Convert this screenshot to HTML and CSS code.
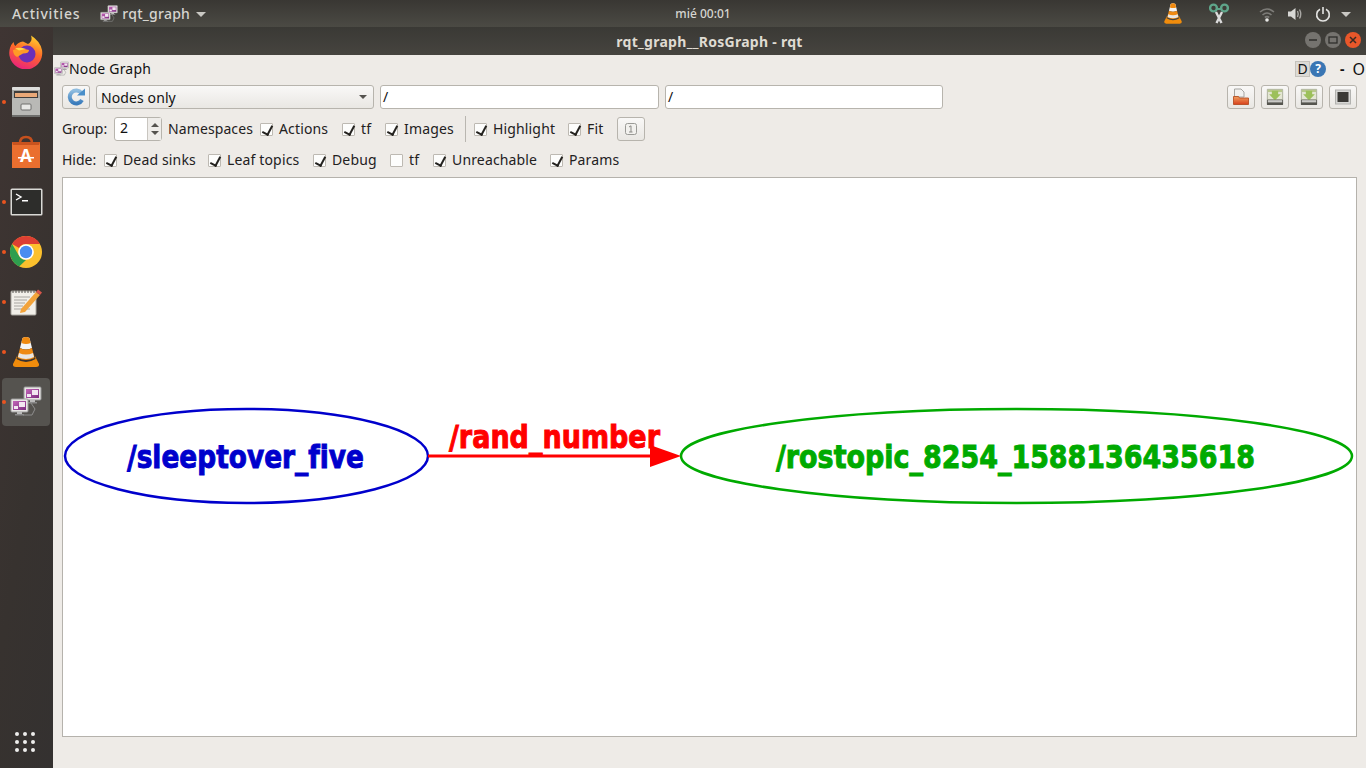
FILE: index.html
```html
<!DOCTYPE html>
<html lang="es">
<head>
<meta charset="utf-8">
<title>rqt_graph__RosGraph - rqt</title>
<link rel="stylesheet" href="styles.css">
</head>
<body>
<svg class="defs" width="0" height="0" aria-hidden="true">
  <defs>
    <linearGradient id="screen" x1="0" y1="0" x2="1" y2="1"><stop offset="0" stop-color="#c266b8"/><stop offset="1" stop-color="#7d2d80"/></linearGradient>
    <linearGradient id="folder" x1="0" y1="0" x2="0" y2="1"><stop offset="0" stop-color="#f0a060"/><stop offset="1" stop-color="#d8401c"/></linearGradient>
    <linearGradient id="blue" x1="0" y1="0" x2="0" y2="1"><stop offset="0" stop-color="#8fbde0"/><stop offset="1" stop-color="#3a7cbc"/></linearGradient>
    <symbol id="rqt" viewBox="0 0 32 32">
      <path d="M13 29 L22 29 L25 23 L21 17" fill="none" stroke="#8d8d8d" stroke-width="1"/>
      <rect x="14" y="1" width="17" height="13" rx="1" fill="#e8e6e4" stroke="#9a9a9a"/>
      <rect x="16" y="3" width="13" height="9" fill="url(#screen)"/>
      <rect x="17" y="8" width="4" height="3" fill="#f2e6f1"/><rect x="22" y="4" width="6" height="5" fill="#f2e6f1"/>
      <rect x="20" y="14" width="5" height="2" fill="#bbb"/><rect x="18" y="16" width="9" height="1.500" fill="#8a8a8a"/>
      <rect x="1" y="13" width="17" height="13" rx="1" fill="#e8e6e4" stroke="#9a9a9a"/>
      <rect x="3" y="15" width="13" height="9" fill="url(#screen)"/>
      <rect x="4" y="20" width="4" height="3" fill="#f2e6f1"/><rect x="9" y="16" width="6" height="5" fill="#f2e6f1"/>
      <rect x="7" y="26" width="5" height="2" fill="#bbb"/><rect x="5" y="28" width="9" height="1.500" fill="#8a8a8a"/>
    </symbol>
    <symbol id="vlc" viewBox="0 0 32 34">
      <path d="M12.500 3 Q16 1 19.500 3 L22 13 Q16 16 10 13 Z" fill="#f5f5f5"/>
      <path d="M12.500 3 Q16 1 19.500 3 L20.600 8 Q16 10 11.400 8 Z" fill="#f08a10"/>
      <path d="M10 13 Q16 16 22 13 L24.500 23 Q16 27 7.500 23 Z" fill="#ef8a12"/>
      <path d="M9 18 Q16 21 23 18 L24 22 Q16 26 8 22 Z" fill="#e9e6e2"/>
      <path d="M7.500 20 L3 29 Q2.500 32 6 32 L26 32 Q29.500 32 29 29 L24.500 20 L25.500 24 Q16 30 6.500 24 Z" fill="#f08c0c"/>
    </symbol>
    <symbol id="drive" viewBox="0 0 20 20">
      <path d="M1.500 1.500 H18.500 V13 H1.500 Z" fill="#e4e6d4" stroke="#a8ac96"/>
      <path d="M2 2 H18 V4.500 H2 Z" fill="#b8c88c"/>
      <path d="M6.500 3 H13.500 V7 H16.500 L10 13.500 L3.500 7 H6.500 Z" fill="#9cc05a"/>
      <path d="M1 13 H19 L19 18 Q19 19 18 19 H2 Q1 19 1 18 Z" fill="#55554f"/>
      <rect x="2" y="13.500" width="16" height="2.500" fill="#c9c9c6"/>
    </symbol>
  </defs>
</svg>

<header class="topbar">
  <div class="top-left">
    <span class="activities">Activities</span>
    <span class="appmenu">
      <svg class="app-icon" width="18" height="18"><use href="#rqt"/></svg>
      <span class="appname">rqt_graph</span>
      <span class="caret"></span>
    </span>
  </div>
  <div class="clock">mié 00:01</div>
  <div class="tray">
    <svg class="tray-vlc" width="22" height="23"><use href="#vlc"/></svg>
    <svg class="tray-scissors" width="20" height="22" viewBox="0 0 20 22">
      <circle cx="4.500" cy="5" r="3.400" fill="none" stroke="#5fa58a" stroke-width="2.400"/>
      <circle cx="15.500" cy="5" r="3.400" fill="none" stroke="#5fa58a" stroke-width="2.400"/>
      <path d="M8 6 H12" stroke="#5fa58a" stroke-width="2"/>
      <path d="M7 9 L12.500 20 M13 9 L7.500 20" stroke="#dcdcdc" stroke-width="2.400" fill="none"/>
    </svg>
    <svg class="tray-wifi" width="16" height="16" viewBox="0 0 16 16">
      <path d="M1 6 Q8 0 15 6 M3.500 9 Q8 5 12.500 9 M5.800 11.500 Q8 9.800 10.200 11.500" fill="none" stroke="#7d7c78" stroke-width="1.600"/>
      <circle cx="8" cy="14" r="1.800" fill="#e8e8e6"/>
    </svg>
    <svg class="tray-vol" width="16" height="16" viewBox="0 0 16 16">
      <path d="M1 5.500 H4 L8.500 2 V14 L4 10.500 H1 Z" fill="#d8d8d5"/>
      <path d="M10.500 5 Q12 8 10.500 11 M12.500 3.500 Q15 8 12.500 12.500" fill="none" stroke="#a9a8a4" stroke-width="1.400"/>
    </svg>
    <svg class="tray-power" width="16" height="16" viewBox="0 0 16 16">
      <path d="M5 3.200 A6.300 6.300 0 1 0 11 3.200" fill="none" stroke="#e4e4e2" stroke-width="1.600"/>
      <path d="M8 1 V8" stroke="#e4e4e2" stroke-width="1.600"/>
    </svg>
    <span class="caret tray-caret"></span>
  </div>
</header>

<div class="desktop">
  <nav class="dock">
    <div class="dock-item">
      <svg width="34" height="34" viewBox="0 0 34 34">
        <defs>
          <linearGradient id="ffa" x1="0.700" y1="0" x2="0.300" y2="1"><stop offset="0" stop-color="#ffd02e"/><stop offset="0.450" stop-color="#ff6a28"/><stop offset="1" stop-color="#e81f80"/></linearGradient>
        </defs>
        <path d="M22 0.500 Q31 6 33 15 A16.500 16.500 0 1 1 1 13 Q2 9.500 4.500 7 Q5 10 6.500 11 Q9 7 14 6.500 L19 9 Q24 6 22 0.500 Z" fill="url(#ffa)"/>
        <circle cx="18" cy="19" r="8.500" fill="#6b2fb8"/>
        <path d="M4 15 Q11 12 20 15 Q20 18.500 14 18.500 L8 22 Q4 20 4 15 Z" fill="#ff9a26"/>
        <path d="M6 13 Q12 12 17 14 L10 15.500 Z" fill="#ffd84a"/>
      </svg>
    </div>
    <div class="dock-item running">
      <svg width="32" height="32" viewBox="0 0 32 32">
        <rect x="2" y="1" width="28" height="30" rx="2" fill="#a6a6a3"/>
        <rect x="2" y="1" width="28" height="3" rx="1" fill="#dededc"/>
        <rect x="4" y="5" width="24" height="9" fill="#3f3d3b"/>
        <rect x="5" y="7" width="22" height="4" fill="#e9a877"/>
        <rect x="2" y="12" width="28" height="19" rx="1" fill="#b9b9b6"/>
        <rect x="2" y="29" width="28" height="2" fill="#6e6e6c"/>
        <rect x="11" y="18" width="10" height="6" rx="1" fill="#e8e8e6" stroke="#6f6f6d"/>
      </svg>
    </div>
    <div class="dock-item">
      <svg width="32" height="34" viewBox="0 0 32 34">
        <path d="M10 8 Q10 2 16 2 Q22 2 22 8" fill="none" stroke="#c6501d" stroke-width="2.500"/>
        <path d="M2 7 H30 V33 H2 Z" fill="#ea6f2f"/>
        <path d="M2 7 H30 L29 10 H3 Z" fill="#c9531e"/>
        <text class="bag-letter" x="16" y="27" text-anchor="middle">A</text>
        <rect x="8" y="22" width="16" height="1.500" fill="#fff"/>
      </svg>
    </div>
    <div class="dock-item running">
      <svg width="33" height="28" viewBox="0 0 33 28">
        <rect x="0.500" y="0.500" width="32" height="27" rx="1.500" fill="#d9d9d6"/>
        <rect x="2" y="2" width="29" height="24" fill="#2d2d2b"/>
        <path d="M6 6 L11 9 L6 12" fill="none" stroke="#fff" stroke-width="1.400"/>
        <rect x="12" y="12" width="6" height="1.500" fill="#fff"/>
      </svg>
    </div>
    <div class="dock-item running">
      <svg width="32" height="32" viewBox="0 0 32 32">
        <circle cx="16" cy="16" r="16" fill="#fbc02d"/>
        <path d="M16 0 A16 16 0 0 1 29.900 8 L16 8 A8 8 0 0 0 9 12 L2.100 8 A16 16 0 0 1 16 0 Z" fill="#dd3f33"/>
        <path d="M2.100 8 L9.100 20 A8 8 0 0 0 16 24 L9.200 30.500 A16 16 0 0 1 2.100 8 Z" fill="#2e9e4f"/>
        <circle cx="16" cy="16" r="7.800" fill="#fff"/>
        <circle cx="16" cy="16" r="6.200" fill="#4a8df0"/>
      </svg>
    </div>
    <div class="dock-item running">
      <svg width="32" height="28" viewBox="0 0 32 28">
        <rect x="1" y="3" width="25" height="24" rx="1" fill="#f1efe9" stroke="#a8a69f"/>
        <path d="M3 2 V5 M6 2 V5 M9 2 V5 M12 2 V5 M15 2 V5 M18 2 V5 M21 2 V5 M24 2 V5" stroke="#55534f" stroke-width="1"/>
        <path d="M4 9 H20 M4 12 H17 M4 15 H15 M4 18 H13 M4 21 H20" stroke="#a7a5a0" stroke-width="1"/>
        <path d="M11 21 L26 4 L30 7 L15 24 L10 25 Z" fill="#f2a33a"/>
        <path d="M26 4 L28 1.500 L32 4.500 L30 7 Z" fill="#d8564a"/>
      </svg>
    </div>
    <div class="dock-item running">
      <svg width="32" height="34"><use href="#vlc"/></svg>
    </div>
    <div class="dock-item running active">
      <svg width="32" height="32"><use href="#rqt"/></svg>
    </div>
    <div class="dock-spacer"></div>
    <div class="dock-grid">
      <i></i><i></i><i></i><i></i><i></i><i></i><i></i><i></i><i></i>
    </div>
  </nav>

  <main class="window">
    <div class="titlebar">
      <span class="title">rqt_graph__RosGraph - rqt</span>
      <div class="win-controls">
        <span class="wc"><svg width="10" height="10" viewBox="0 0 10 10"><path d="M1 5 H9" stroke="#2f2e2b" stroke-width="1.500"/></svg></span>
        <span class="wc"><svg width="10" height="10" viewBox="0 0 10 10"><rect x="1" y="2" width="8" height="6" fill="none" stroke="#2f2e2b" stroke-width="1.300"/></svg></span>
        <span class="wc close"><svg width="10" height="10" viewBox="0 0 10 10"><path d="M2 2 L8 8 M8 2 L2 8" stroke="#3a2a22" stroke-width="1.500"/></svg></span>
      </div>
    </div>

    <div class="panel">
      <div class="dock-title">
        <svg class="dt-icon" width="15" height="16"><use href="#rqt"/></svg>
        <span class="dt-text">Node Graph</span>
        <span class="dt-right">
          <span class="dt-d">D</span>
          <span class="dt-help">?</span>
          <span class="dt-dash">-</span>
          <span class="dt-o">O</span>
        </span>
      </div>

      <div class="row row-top">
        <button class="btn refresh" aria-label="Refresh">
          <svg width="20" height="18" viewBox="0 0 20 18">
            <path d="M15.500 5 A6.500 6.500 0 1 0 16 12" fill="none" stroke="url(#blue)" stroke-width="4"/>
            <path d="M11 7.500 H19 V0.500 Z" fill="#4a8fc9"/>
          </svg>
        </button>
        <div class="select"><span>Nodes only</span><span class="select-caret"></span></div>
        <div class="input">/</div>
        <div class="input second">/</div>
        <div class="spacer"></div>
        <div class="tools">
          <button class="btn" aria-label="Open">
            <svg width="18" height="18" viewBox="0 0 18 18">
              <path d="M2.500 1 H9 L12 4 V9 H2.500 Z" fill="#f1f1ef" stroke="#a5a5a2"/>
              <path d="M1.500 8.500 H6.500 L7.500 10 H16.500 V16.500 H1.500 Z" fill="url(#folder)" stroke="#b04418" stroke-width="0.800"/>
            </svg>
          </button>
          <button class="btn" aria-label="Save DOT"><svg width="18" height="18"><use href="#drive"/></svg></button>
          <button class="btn" aria-label="Save SVG"><svg width="18" height="18"><use href="#drive"/></svg></button>
          <button class="btn" aria-label="Screenshot">
            <svg width="18" height="18" viewBox="0 0 18 18">
              <rect x="1.500" y="2" width="15" height="14" fill="#d6d6d4" stroke="#b2b2af"/>
              <rect x="3.500" y="4" width="11" height="10" fill="#3a3936"/>
            </svg>
          </button>
        </div>
      </div>

      <div class="row row-group">
        <span class="lbl l-group">Group:</span>
        <div class="spin">
          <span class="spin-val">2</span>
          <span class="spin-arrows"><i class="up"></i><i class="down"></i></span>
        </div>
        <span class="lbl l-ns">Namespaces</span>
        <label class="chk w-actions"><span class="box on"></span>Actions</label>
        <label class="chk w-tf"><span class="box on"></span>tf</label>
        <label class="chk w-images"><span class="box on"></span>Images</label>
        <span class="sep"></span>
        <label class="chk w-high"><span class="box on"></span>Highlight</label>
        <label class="chk w-fit"><span class="box on"></span>Fit</label>
        <button class="btn small" aria-label="Fit in view">
          <svg width="14" height="14" viewBox="0 0 14 14">
            <rect x="1.500" y="1.500" width="11" height="11" rx="2" fill="#f2f1ee" stroke="#9a9a96"/>
            <path d="M5 5 L7 3.800 V10 M5 10 H8.500" fill="none" stroke="#8a8a86"/>
          </svg>
        </button>
      </div>

      <div class="row row-hide">
        <span class="lbl l-hide">Hide:</span>
        <label class="chk w-dead"><span class="box on"></span>Dead sinks</label>
        <label class="chk w-leaf"><span class="box on"></span>Leaf topics</label>
        <label class="chk w-debug"><span class="box on"></span>Debug</label>
        <label class="chk w-tf2"><span class="box"></span>tf</label>
        <label class="chk w-unr"><span class="box on"></span>Unreachable</label>
        <label class="chk w-par"><span class="box on"></span>Params</label>
      </div>

      <div class="canvas">
        <svg class="graph" width="1293" height="558" viewBox="63 178 1293 558">
          <ellipse class="n-blue" cx="246.500" cy="456" rx="181.500" ry="47"/>
          <ellipse class="n-green" cx="1016.500" cy="456" rx="335.500" ry="47"/>
          <path class="edge" d="M428 456 H652"/>
          <polygon class="arrow" points="650,445 681,456 650,467"/>
          <text class="g-text t-blue" x="127" y="468" textLength="237" lengthAdjust="spacingAndGlyphs">/sleeptover_five</text>
          <text class="g-text t-red" x="449" y="448" textLength="211" lengthAdjust="spacingAndGlyphs">/rand_number</text>
          <text class="g-text t-green" x="776" y="468" textLength="479" lengthAdjust="spacingAndGlyphs">/rostopic_8254_1588136435618</text>
        </svg>
      </div>
    </div>
  </main>
</div>
</body>
</html>
```

FILE: styles.css
```css
* { box-sizing: border-box; }
html, body { margin: 0; padding: 0; }
body {
  width: 1366px;
  height: 768px;
  overflow: hidden;
  display: flex;
  flex-direction: column;
  font-family: "Noto Sans", "Open Sans", sans-serif;
  font-size: 14px;
  color: #23211e;
  background: #2f2b29;
}
.defs { position: absolute; }

/* top bar */
.topbar {
  height: 27px;
  flex: none;
  display: grid;
  grid-template-columns: 1fr auto 1fr;
  align-items: center;
  background: linear-gradient(#393733, #4b4a44);
  color: #d6d5d0;
}
.top-left { display: flex; align-items: center; }
.activities { margin-left: 12px; font-weight: 500; font-size: 14px; letter-spacing: 0.8px; }
.appmenu { display: flex; align-items: center; margin-left: 20px; }
.app-icon { margin-right: 4px; }
.appname { font-size: 14px; font-weight: 500; letter-spacing: 0.25px; }
.caret {
  width: 0; height: 0; margin-left: 6px; margin-top: 1px;
  border-left: 5px solid transparent;
  border-right: 5px solid transparent;
  border-top: 5px solid #c9c8c3;
}
.clock { font-size: 12px; font-weight: 500; margin-left: 40px; }
.tray { display: flex; align-items: center; justify-content: flex-end; padding-right: 15px; }
.tray-vlc { margin-right: 25px; }
.tray-scissors { margin-right: 30px; }
.tray-wifi { margin-right: 12px; }
.tray-vol { margin-right: 12px; }
.tray-power { margin-right: 10px; }
.tray-caret { margin-left: 0; }

.desktop { flex: 1; display: flex; min-height: 0; }

/* launcher */
.dock {
  width: 53px;
  flex: none;
  display: flex;
  flex-direction: column;
  align-items: flex-start;
  padding: 1px 0 0 2px;
  gap: 2px;
  background: linear-gradient(100deg, #3f3533, #37322f 60%, #343130);
}
.dock-item {
  position: relative;
  width: 48px;
  height: 48px;
  flex: none;
  display: flex;
  align-items: center;
  justify-content: center;
}
.dock-item.running::before {
  content: "";
  position: absolute;
  left: 0;
  top: 22px;
  width: 4px;
  height: 4px;
  border-radius: 50%;
  background: #e95420;
}
.dock-item.active { background: #55534f; border-radius: 4px; }
.dock-spacer { flex: 1; }
.dock-grid {
  display: grid;
  grid-template-columns: repeat(3, 4px);
  gap: 4px;
  margin: 0 0 16px 13px;
}
.dock-grid i { width: 4px; height: 4px; border-radius: 50%; background: #eeeeec; }
.bag-letter { font: bold 17px "Noto Sans", sans-serif; fill: #fff; }

/* window */
.window { flex: 1; display: flex; flex-direction: column; min-width: 0; }
.titlebar {
  height: 28px;
  flex: none;
  position: relative;
  display: flex;
  align-items: center;
  justify-content: center;
  background: linear-gradient(#3a3935, #46443f);
  color: #dfdbd2;
}
.title { font-size: 14px; font-weight: 700; letter-spacing: 0.28px; }
.win-controls {
  position: absolute;
  right: 5px;
  top: 5px;
  display: flex;
  gap: 4px;
}
.wc {
  width: 16px; height: 16px;
  border-radius: 50%;
  background: #75736f;
  display: flex;
  align-items: center;
  justify-content: center;
}
.wc.close { background: #e9572a; }

.panel {
  flex: 1;
  display: flex;
  flex-direction: column;
  background: #eeebe7;
  padding: 0 9px 31px 9px;
  min-height: 0;
}
.dock-title {
  height: 30px;
  flex: none;
  display: flex;
  align-items: center;
  padding-bottom: 3px;
  margin: 0 -8px 0 -8px;
  color: #111;
}
.dt-icon { flex: none; margin-left: 0; }
.dt-text { font-size: 14px; letter-spacing: 0.2px; }
.dt-right { margin-left: auto; display: flex; align-items: center; }
.dt-d {
  width: 15px; height: 16px;
  background: #dcdad5;
  border: 1px solid #c4c2bc;
  font-size: 14px;
  line-height: 14px;
  text-align: center;
}
.dt-help {
  width: 16px; height: 16px;
  border-radius: 50%;
  background: #3a76b4;
  color: #fff;
  font-size: 12px;
  font-weight: 700;
  line-height: 16px;
  text-align: center;
}
.dt-dash { margin-left: 14px; font-weight: 700; }
.dt-o { margin-left: 8px; font-size: 16px; line-height: 16px; }

.row { display: flex; align-items: center; flex: none; }
.row-top { height: 24px; }
.row-group { height: 24px; margin-top: 8px; }
.row-hide { height: 24px; margin-top: 7px; }
.spacer { flex: 1; }

.btn {
  width: 28px;
  height: 24px;
  padding: 0;
  flex: none;
  display: flex;
  align-items: center;
  justify-content: center;
  border: 1px solid #b7b4ad;
  border-radius: 3px;
  background: linear-gradient(#f9f8f7, #e9e7e3);
}
.select {
  width: 278px;
  height: 24px;
  margin-left: 6px;
  padding: 0 6px 0 4px;
  display: flex;
  align-items: center;
  justify-content: space-between;
  border: 1px solid #b7b4ad;
  border-radius: 3px;
  background: linear-gradient(#f9f8f7, #e9e7e3);
  color: #111;
  letter-spacing: 0.1px;
}
.select-caret {
  width: 0; height: 0;
  border-left: 4px solid transparent;
  border-right: 4px solid transparent;
  border-top: 4px solid #55534f;
}
.input {
  width: 279px;
  height: 24px;
  margin-left: 6px;
  padding: 0 2px;
  line-height: 22px;
  border: 1px solid #b7b4ad;
  border-radius: 3px;
  background: #fff;
  color: #111;
}
.input.second { width: 278px; }
.tools { display: flex; gap: 6px; }

.lbl { color: #23211e; flex: none; padding-bottom: 2px; }
.l-group { width: 52px; }
.l-ns { width: 92px; margin-left: 6px; letter-spacing: 0.1px; }
.l-hide { width: 42px; }

.spin {
  width: 48px;
  height: 24px;
  display: flex;
  align-items: stretch;
  border: 1px solid #b7b4ad;
  border-radius: 3px;
  background: #fff;
}
.spin-val { flex: 1; padding-left: 5px; line-height: 20px; color: #111; }
.spin-arrows {
  width: 14px;
  display: flex;
  flex-direction: column;
  align-items: center;
  justify-content: center;
  gap: 4px;
  border-left: 1px solid #c9c6c0;
  background: #efedea;
}
.spin-arrows .up, .spin-arrows .down {
  width: 0; height: 0;
  border-left: 4px solid transparent;
  border-right: 4px solid transparent;
}
.spin-arrows .up { border-bottom: 4px solid #55534f; }
.spin-arrows .down { border-top: 4px solid #55534f; }

.chk { display: flex; align-items: center; flex: none; color: #23211e; padding-bottom: 2px; letter-spacing: 0.15px; }
.box {
  position: relative;
  width: 13px;
  height: 13px;
  margin: 2px 6px 0 0;
  flex: none;
  background: #fdfdfc;
  border: 1px solid #bdb9b2;
  border-radius: 1px;
}
.box.on::after {
  content: "";
  position: absolute;
  left: 3px;
  top: 0;
  width: 5px;
  height: 9px;
  border-right: 2px solid #23211e;
  border-bottom: 2px solid #23211e;
  transform: rotate(28deg);
}
.w-actions { width: 82px; }
.w-tf { width: 43px; }
.w-images { width: 80px; }
.sep { width: 1px; height: 26px; background: #b9b6b0; margin-right: 8px; }
.w-high { width: 94px; }
.w-fit { width: 49px; }
.btn.small { height: 24px; }

.w-dead { width: 104px; }
.w-leaf { width: 105px; }
.w-debug { width: 77px; }
.w-tf2 { width: 43px; }
.w-unr { width: 117px; }
.w-par { width: 80px; }

.canvas {
  flex: 1;
  margin-top: 5px;
  background: #fff;
  border: 1px solid #b5b2ac;
  min-height: 0;
  overflow: hidden;
}
.graph { display: block; }
.n-blue, .n-green { fill: none; stroke-width: 2.500; }
.n-blue { stroke: #0000cc; }
.n-green { stroke: #00aa00; }
.edge { fill: none; stroke: #ff0000; stroke-width: 3; }
.arrow { fill: #ff0000; }
.g-text { font-family: "DejaVu Sans", sans-serif; font-weight: 700; font-size: 32px; stroke-width: 1px; }
.t-blue { fill: #0000cc; stroke: #0000cc; }
.t-red { fill: #ff0000; stroke: #ff0000; }
.t-green { fill: #00aa00; stroke: #00aa00; }
```
